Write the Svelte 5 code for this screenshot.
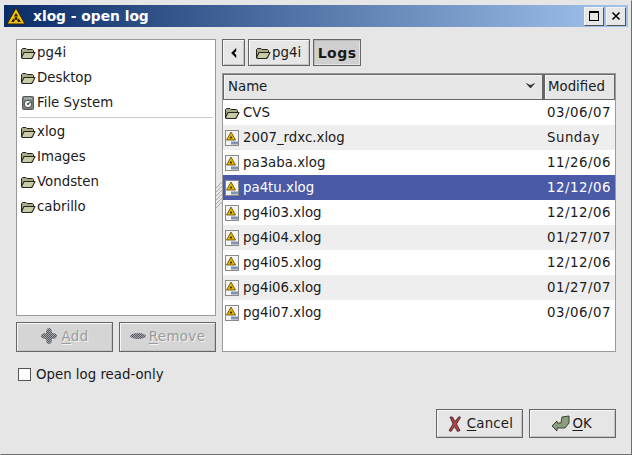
<script lang="ts">
  const places = [
    { name: "pg4i", icon: "folder" },
    { name: "Desktop", icon: "folder" },
    { name: "File System", icon: "disk" }
  ];
  const bookmarks = ["xlog", "Images", "Vondsten", "cabrillo"];
  const files = [
    { name: "CVS", date: "03/06/07", icon: "folder" },
    { name: "2007_rdxc.xlog", date: "Sunday", icon: "doc" },
    { name: "pa3aba.xlog", date: "11/26/06", icon: "doc" },
    { name: "pa4tu.xlog", date: "12/12/06", icon: "doc", selected: true },
    { name: "pg4i03.xlog", date: "12/12/06", icon: "doc" },
    { name: "pg4i04.xlog", date: "01/27/07", icon: "doc" },
    { name: "pg4i05.xlog", date: "12/12/06", icon: "doc" },
    { name: "pg4i06.xlog", date: "01/27/07", icon: "doc" },
    { name: "pg4i07.xlog", date: "03/06/07", icon: "doc" }
  ];
</script>

{#snippet folder()}
  <svg class="ico" width="16" height="16" viewBox="0 0 16 16" aria-hidden="true">
    <path d="M1.5 12.5V4.5L2.5 3.5H6L7 4.5H12.5L13.5 5.5V7" fill="#a9ab88" stroke="#26261c" />
    <path d="M1.5 12.5L4 7.5H15L12.5 12.5L11.5 13.5H2.5Z" fill="#c9cba8" stroke="#26261c" stroke-width="1.1" stroke-linejoin="round" />
  </svg>
{/snippet}

{#snippet disk()}
  <svg class="ico" width="16" height="16" viewBox="0 0 16 16" aria-hidden="true">
    <rect x="2.5" y="1.5" width="11" height="13" rx="1" fill="#77807a" stroke="#55595a" />
    <rect x="4" y="2.5" width="8" height="2" fill="#aab2ac" />
    <circle cx="8" cy="9" r="3.8" fill="#eeeeee" stroke="#4c4c4c" />
    <path d="M8 9L11 6.5" stroke="#666" stroke-width="1.4" />
    <circle cx="8" cy="9" r="1" fill="#444" />
  </svg>
{/snippet}

{#snippet doc()}
  <svg class="ico" width="16" height="16" viewBox="0 0 16 16" aria-hidden="true">
    <rect x="1.5" y="0.5" width="13" height="15" fill="#f4f4f4" stroke="#8a8a8a" />
    <path d="M7 2L11.5 10H2.5Z" fill="#e2b400" stroke="#5a4a00" stroke-width="0.8" />
    <circle cx="7" cy="7.6" r="1.1" fill="#3a3000" />
    <rect x="7" y="11.5" width="7" height="3" fill="#7f93b4" />
  </svg>
{/snippet}

{#snippet fileIcon(kind)}
  {#if kind === "folder"}
    {@render folder()}
  {:else if kind === "disk"}
    {@render disk()}
  {:else}
    {@render doc()}
  {/if}
{/snippet}

<div class="window">
  <div class="titlebar">
    <svg class="app-icon" width="20" height="20" viewBox="0 0 20 20" aria-hidden="true">
      <path d="M10 2L19 18H1Z" fill="#f4c400" stroke="#2d2100" />
      <circle cx="10" cy="12.5" r="1.4" fill="#2a1d00" />
      <path d="M10 7L12.2 10.5H7.8ZM5 16L7.4 12.4L9 14L8 16ZM15 16L12.6 12.4L11 14L12 16Z" fill="#2a1d00" />
    </svg>
    <span class="title">xlog - open log</span>
    <div class="wm-buttons">
      <span class="wm-btn"><span class="wm-max"></span></span>
      <span class="wm-btn">
        <svg width="10" height="10" viewBox="0 0 10 10" aria-hidden="true">
          <path d="M1.5 1.5L8.5 8.5M8.5 1.5L1.5 8.5" stroke="#000" stroke-width="1.6" />
        </svg>
      </span>
    </div>
  </div>

  <div class="body">
    <div class="panes">
      <div class="left">
        <div class="places">
          {#each places as p}
            <div class="place">{@render fileIcon(p.icon)}<span>{p.name}</span></div>
          {/each}
          <div class="sep"></div>
          {#each bookmarks as b}
            <div class="place">{@render folder()}<span>{b}</span></div>
          {/each}
        </div>
        <div class="place-actions">
          <button class="btn disabled" type="button">
            <svg width="18" height="18" viewBox="0 0 18 18" aria-hidden="true">
              <defs>
                <pattern id="dither" width="2" height="2" patternUnits="userSpaceOnUse">
                  <rect width="2" height="2" fill="#a4a8ac" />
                  <rect width="1" height="1" fill="#565a5e" />
                  <rect x="1" y="1" width="1" height="1" fill="#565a5e" />
                </pattern>
              </defs>
              <path d="M9 1C11 1 12 3 12 6C15 6 17 7 17 9C17 11 15 12 12 12C12 15 11 17 9 17C7 17 6 15 6 12C3 12 1 11 1 9C1 7 3 6 6 6C6 3 7 1 9 1Z" fill="url(#dither)" />
            </svg>
            <span class="disabled-label"><u>A</u>dd</span>
          </button>
          <button class="btn disabled" type="button">
            <svg width="16" height="16" viewBox="0 0 16 16" aria-hidden="true">
              <ellipse cx="8" cy="8" rx="8" ry="3" fill="url(#dither)" />
            </svg>
            <span class="disabled-label"><u>R</u>emove</span>
          </button>
        </div>
      </div>

      <div class="grip" aria-hidden="true">
        <svg width="6" height="27" viewBox="0 0 6 27">
          <path d="M0 6L6 0M0 10L6 4M0 14L6 8M0 18L6 12M0 22L6 16M0 26L6 20" stroke="#aaa" stroke-width="1" />
        </svg>
      </div>

      <div class="right">
        <div class="pathbar">
          <button class="btn nav" type="button">
            <svg width="8" height="10" viewBox="0 0 8 10" aria-hidden="true">
              <path d="M6 0.5L1.5 5L6 9.5V7L4 5L6 3Z" fill="#000" stroke="#000" stroke-width="0.5" />
            </svg>
          </button>
          <button class="btn crumb" type="button">{@render folder()}<span>pg4i</span></button>
          <button class="btn crumb current" type="button">Logs</button>
        </div>
        <div class="files">
          <div class="header">
            <div class="col name-col">
              <span>Name</span>
              <svg width="9" height="6" viewBox="0 0 9 6" aria-hidden="true">
                <path d="M0.5 0.5L4.5 5L8.5 0.5L4.5 2.5Z" fill="#222" stroke="#222" stroke-width="0.6" />
              </svg>
            </div>
            <div class="col date-col">Modified</div>
          </div>
          <div class="rows">
            {#each files as f, i}
              <div class="row" class:alt={i % 2 === 1} class:selected={f.selected}>
                <div class="cell-name">{@render fileIcon(f.icon)}<span>{f.name}</span></div>
                <div class="cell-date">{f.date}</div>
              </div>
            {/each}
          </div>
        </div>
      </div>
    </div>

    <label class="readonly">
      <span class="check"></span>
      <span>Open log read-only</span>
    </label>

    <div class="actions">
      <button class="btn action" type="button">
        <svg width="18" height="20" viewBox="0 0 18 20" aria-hidden="true">
          <path d="M4 3L6.5 3L9 7.5L13 2.5L14.5 3.5L10.5 10L14 16.5L11.5 17.5L8.5 12.5L5 17.5L3 16.5L7 10Z" fill="#b5404a" stroke="#3a1a1a" stroke-width="0.8" />
        </svg>
        <span class="action-label cancel"><u>C</u>ancel</span>
      </button>
      <button class="btn action ok" type="button">
        <svg width="20" height="20" viewBox="0 0 20 20" aria-hidden="true">
          <path d="M1 12L6 7V9H10L11 3L18 2V9L14 14H6V17Z" fill="#8b9f7e" stroke="#2c3527" stroke-width="0.9" stroke-linejoin="round" />
        </svg>
        <span class="action-label"><u>O</u>K</span>
      </button>
    </div>
  </div>
</div>

<style>
  :global(body) {
    margin: 0;
    background: #e6e6e6;
  }

  .window {
    width: 632px;
    height: 455px;
    box-sizing: border-box;
    display: flex;
    flex-direction: column;
    padding: 4px 4px 4px 4px;
    background: #e6e6e6;
    border: 1px solid #6e6e6e;
    border-top-color: #e6e6e6;
    border-left-color: #e6e6e6;
    font-family: "DejaVu Sans", sans-serif;
    font-size: 13.33px;
    color: #1a1a1a;
    overflow: hidden;
  }

  .titlebar {
    flex: none;
    height: 22px;
    display: flex;
    align-items: center;
    background: linear-gradient(to right, #0a2c68, #a3c4ec);
    color: #fff;
    margin: 0 -1px 0 -1px;
  }
  .app-icon {
    margin-left: 2px;
    flex: none;
  }
  .title {
    margin-left: 7px;
    font-weight: bold;
    font-size: 13.8px;
  }
  .wm-buttons {
    margin-left: auto;
    display: flex;
    gap: 2px;
    padding-right: 2px;
  }
  .wm-btn {
    width: 20px;
    height: 19px;
    box-sizing: border-box;
    display: flex;
    align-items: center;
    justify-content: center;
    background: #e6e6e6;
    border: 1px solid #555;
    border-top-color: #f4f4f4;
    border-left-color: #f4f4f4;
  }
  .wm-max {
    width: 8px;
    height: 7px;
    border: 1px solid #000;
    border-top-width: 2px;
  }

  .body {
    flex: 1;
    display: flex;
    flex-direction: column;
    padding: 12px 11px 11px 11px;
    min-height: 0;
  }

  .panes {
    display: flex;
    height: 313px;
    flex: none;
  }
  .left {
    width: 200px;
    flex: none;
    display: flex;
    flex-direction: column;
    gap: 6px;
  }
  .places {
    flex: 1;
    background: #fff;
    border: 1px solid #9a9a9a;
    padding: 0 2px;
  }
  .place {
    height: 25px;
    display: flex;
    align-items: center;
    gap: 1px;
    padding-left: 1px;
    white-space: nowrap;
  }
  .sep {
    height: 1px;
    background: #c8c8c8;
    margin: 2px 0 1px 0;
  }
  .place-actions {
    display: flex;
    gap: 6px;
  }

  .btn {
    box-sizing: border-box;
    display: flex;
    align-items: center;
    justify-content: center;
    background: #e6e6e6;
    border: 1px solid #666;
    box-shadow: inset 1px 1px 0 #f6f6f6, inset -1px -1px 0 #c4c4c4;
    padding: 0;
    font: inherit;
    color: inherit;
  }
  .btn.disabled {
    flex: 1;
    height: 30px;
    gap: 3px;
    padding-bottom: 2px;
    background: #d5d5d5;
    color: #9a9a9a;
    text-shadow: 1px 1px 0 #f4f4f4;
  }
  .disabled-label {
    letter-spacing: 0.4px;
  }

  .grip {
    width: 6px;
    flex: none;
    margin-top: 143px;
  }
  .right {
    flex: 1;
    min-width: 0;
    display: flex;
    flex-direction: column;
    gap: 7px;
  }
  .pathbar {
    display: flex;
    gap: 3px;
    height: 27px;
  }
  .nav {
    width: 23px;
  }
  .crumb {
    padding: 0 8px 0 6px;
    gap: 1px;
  }
  .crumb.current {
    width: 48px;
    padding: 0;
    font-weight: bold;
    font-size: 14px;
    letter-spacing: 0.5px;
    background: #cfcfcf;
    box-shadow: inset 1px 1px 0 #b8b8b8, inset -1px -1px 0 #e6e6e6;
  }

  .files {
    flex: 1;
    background: #fff;
    border: 1px solid #9a9a9a;
    min-height: 0;
  }
  .header {
    display: flex;
    height: 26px;
  }
  .col {
    box-sizing: border-box;
    display: flex;
    align-items: center;
    background: #e6e6e6;
    border: 1px solid #666;
    box-shadow: inset 1px 1px 0 #f6f6f6;
    padding-left: 4px;
    padding-bottom: 2px;
  }
  .name-col {
    flex: 1;
    justify-content: space-between;
    padding-right: 7px;
  }
  .date-col {
    width: 72px;
    flex: none;
    border-left: 2px solid #666;
    padding-left: 3px;
  }

  .row {
    height: 25px;
    display: flex;
    align-items: center;
    background: #fff;
  }
  .row.alt {
    background: #eeeeee;
  }
  .row.selected {
    background: #4a5aa6;
    color: #fff;
  }
  .cell-name {
    flex: 1;
    display: flex;
    align-items: center;
    gap: 3px;
    padding-left: 1px;
  }
  .cell-date {
    width: 68px;
    flex: none;
    padding-left: 4px;
    letter-spacing: 0.5px;
  }
  .ico {
    flex: none;
  }

  .readonly {
    display: flex;
    align-items: center;
    gap: 5px;
    margin-top: 14px;
    height: 17px;
    padding-left: 2px;
  }
  .check {
    width: 11px;
    height: 11px;
    background: #fff;
    border: 1px solid #555;
  }

  .actions {
    margin-top: auto;
    display: flex;
    justify-content: flex-end;
    gap: 6px;
    padding-bottom: 1px;
  }
  .action {
    width: 87px;
    height: 29px;
    gap: 3px;
  }
  .ok {
    gap: 1px;
    padding-right: 2px;
  }
  .cancel {
    letter-spacing: 0.2px;
  }
  u {
    text-underline-offset: 2px;
    text-decoration-thickness: 1px;
  }
</style>
